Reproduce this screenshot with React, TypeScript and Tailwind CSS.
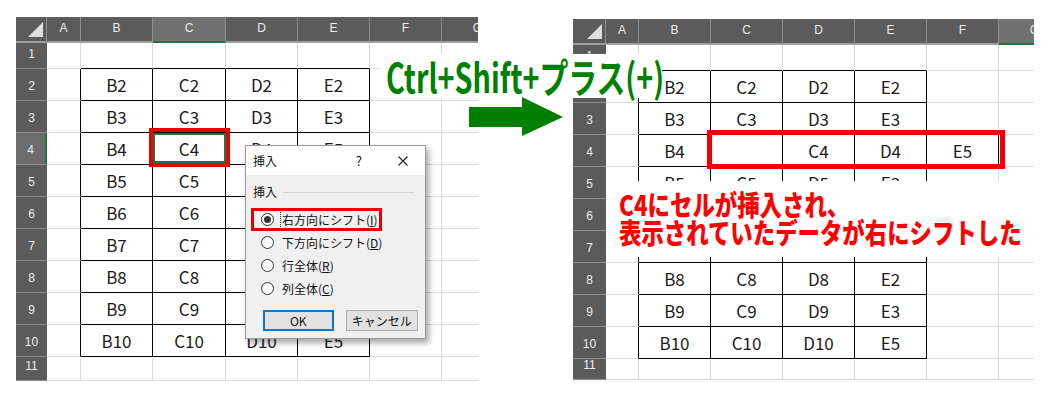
import { Fragment } from 'react'

type Row = (string | null)[]

interface SheetProps {
  gridClass: string
  data: Record<number, Row>
  inTable: (r: number, c: number) => boolean
  selCol?: number
  selRow?: number
}

const COLS = ['A', 'B', 'C', 'D', 'E', 'F', 'G']
const ROWS = Array.from({ length: 11 }, (_, i) => i + 1)

const leftData: Record<number, Row> = {
  2: [null, 'B2', 'C2', 'D2', 'E2'],
  3: [null, 'B3', 'C3', 'D3', 'E3'],
  4: [null, 'B4', 'C4', 'D4', 'E5'],
  5: [null, 'B5', 'C5', 'D5', 'E3'],
  6: [null, 'B6', 'C6', 'D6', 'E6'],
  7: [null, 'B7', 'C7', 'D7', 'E7'],
  8: [null, 'B8', 'C8', 'D8', 'E2'],
  9: [null, 'B9', 'C9', 'D9', 'E3'],
  10: [null, 'B10', 'C10', 'D10', 'E5'],
}

const rightData: Record<number, Row> = {
  ...leftData,
  4: [null, 'B4', null, 'C4', 'D4', 'E5'],
}

const leftTable = (r: number, c: number) => r >= 2 && r <= 10 && c >= 2 && c <= 5
const rightTable = (r: number, c: number) => leftTable(r, c) || (r === 4 && c === 6)

function Corner() {
  return (
    <div className="flex items-end justify-end pr-[3px] pb-[4px] bg-[#5b5b5b] border-r border-r-[#8f8f8f] border-b-2 border-b-[#9f9f9f]">
      <svg width="15" height="15" viewBox="0 0 15 15">
        <polygon points="15,0 15,15 0,15" fill="#dedede" />
      </svg>
    </div>
  )
}

function Sheet({ gridClass, data, inTable, selCol, selRow }: SheetProps) {
  return (
    <div className={`grid overflow-hidden font-['Liberation_Sans',sans-serif] ${gridClass}`}>
      <Corner />
      {COLS.map((c, i) => (
        <div
          key={c}
          className={`flex items-center justify-center pb-[3px] border-r border-r-[#8f8f8f] border-b-2 text-[12px] text-[#ececec] ${selCol === i + 1 ? 'bg-[#717171] border-b-[#217346]' : 'bg-[#5b5b5b] border-b-[#9f9f9f]'}`}
        >
          {c}
        </div>
      ))}
      {ROWS.map(r => (
        <Fragment key={r}>
          <div
            className={`flex items-end justify-center pb-[5px] border-b border-b-[#8f8f8f] text-[12px] text-[#ececec] ${selRow === r ? 'bg-[#6c6c6c] border-r-2 border-r-[#217346]' : 'bg-[#5b5b5b]'}`}
          >
            {r}
          </div>
          {COLS.map((_, ci) => {
            const c = ci + 1
            const right = inTable(r, c) || inTable(r, c + 1)
            const bottom = inTable(r, c) || inTable(r + 1, c)
            return (
              <div
                key={c}
                className={`flex items-center justify-center border-r border-b bg-white font-['Noto_Sans_CJK_JP',sans-serif] text-[17px] text-[#1b1b1b] ${right ? 'border-r-black' : 'border-r-[#dadada]'} ${bottom ? 'border-b-black' : 'border-b-[#dadada]'}`}
              >
                {data[r]?.[ci] ?? ''}
              </div>
            )
          })}
        </Fragment>
      ))}
    </div>
  )
}

function Radio({ checked, label, hot, focus }: { checked?: boolean; label: string; hot: string; focus?: boolean }) {
  return (
    <div className="flex items-center h-[23px]">
      <div className="ml-[8px] w-[13px] h-[13px] rounded-full border border-[#333] bg-white flex items-center justify-center">
        {checked && <div className="w-[7px] h-[7px] rounded-full bg-[#333]" />}
      </div>
      <span className={`ml-[6px] px-[1px] leading-[17px] ${focus ? 'border border-dotted border-[#333]' : 'border border-transparent'}`}>
        {label}(<span className="underline">{hot}</span>)
      </span>
    </div>
  )
}

function InsertDialog() {
  return (
    <div className="absolute left-[245px] top-[145px] w-[181px] h-[194px] border border-[#9b9b9b] bg-[#f0f0f0] shadow-[3px_4px_6px_rgba(0,0,0,0.35)] text-[12px] text-[#111]">
      <div className="h-[29px] bg-white flex items-center pl-[7px]">
        <span>挿入</span>
        <span className="ml-auto mr-[36px] text-[13px]">?</span>
        <svg className="mr-[17px]" width="10" height="10" viewBox="0 0 10 10">
          <path d="M0.5 0.5 L9.5 9.5 M9.5 0.5 L0.5 9.5" stroke="#222" strokeWidth="1.1" />
        </svg>
      </div>
      <div className="px-[7px] pt-[9px]">
        <div className="flex items-center gap-[6px] leading-[16px]">
          <span>挿入</span>
          <div className="flex-1 h-px bg-[#d6d6d6] mr-[4px]" />
        </div>
        <div className="mt-[8px] flex flex-col">
          <Radio checked focus label="右方向にシフト" hot="I" />
          <Radio label="下方向にシフト" hot="D" />
          <Radio label="行全体" hot="R" />
          <Radio label="列全体" hot="C" />
        </div>
        <div className="mt-[10px] flex gap-[12px] ml-[10px]">
          <button className="w-[71px] h-[21px] border-2 border-[#0078d7] bg-[#e1e1e1] flex items-center justify-center">OK</button>
          <button className="w-[73px] h-[21px] border border-[#adadad] bg-[#e1e1e1] flex items-center justify-center">キャンセル</button>
        </div>
      </div>
      <div className="absolute left-[5px] top-[62px] w-[131px] h-[23px] border-[3px] border-[#e60000]" />
    </div>
  )
}

export default function App() {
  return (
    <div className="relative w-[1050px] h-[400px] overflow-hidden bg-white font-['Noto_Sans_CJK_JP',sans-serif]">
      <div className="flex items-start pl-[16px] pt-[17px]">
        <div className="w-[462px]">
          <Sheet
            gridClass="grid-cols-[31px_34px_72px_73px_72px_72px_72px_72px] grid-rows-[26px_26px_repeat(9,32px)_24px]"
            data={leftData}
            inTable={leftTable}
            selCol={3}
            selRow={4}
          />
        </div>
        <div className="ml-[95px] mt-[2px] w-[461px]">
          <Sheet
            gridClass="grid-cols-[33px_33px_72px_72px_72px_72px_72px_72px] grid-rows-[26px_26px_repeat(9,32px)_21px]"
            data={rightData}
            inTable={rightTable}
            selCol={7}
          />
        </div>
      </div>

      {/* selected C4 on the left sheet */}
      <div className="absolute left-[153px] top-[133px] w-[73px] h-[30px] border-2 border-[#217346]" />
      <div className="absolute left-[149px] top-[128px] w-[81px] h-[39px] border-4 border-[#e60000]" />

      <InsertDialog />

      {/* shortcut label */}
      <div className="absolute left-[380px] top-[54px] w-[282px] h-[44px] bg-white">
        <div className="ml-[6px] mt-[2px] w-max whitespace-nowrap origin-left scale-x-[0.72] text-[40px] leading-[40px] font-bold text-[#008000]">
          Ctrl+Shift+プラス(+)
        </div>
      </div>
      <svg className="absolute left-[469px] top-[97px]" width="95" height="40" viewBox="0 0 95 40">
        <polygon points="0,10 53,10 53,0 94,20 53,39 53,30 0,30" fill="#008000" />
      </svg>

      {/* result highlight on the right sheet */}
      <div className="absolute left-[707px] top-[130px] w-[298px] h-[39px] border-[5px] border-[#f00000]" />

      <div className="absolute left-[606px] top-[181px] w-[428px] h-[76px] bg-white">
        <div className="ml-[13px] mt-[9px] w-max whitespace-nowrap origin-left scale-x-[0.8] text-[28px] leading-[28px] font-black text-[#ff0000]">
          <div>C4にセルが挿入され、</div>
          <div>表示されていたデータが右にシフトした</div>
        </div>
      </div>
    </div>
  )
}
